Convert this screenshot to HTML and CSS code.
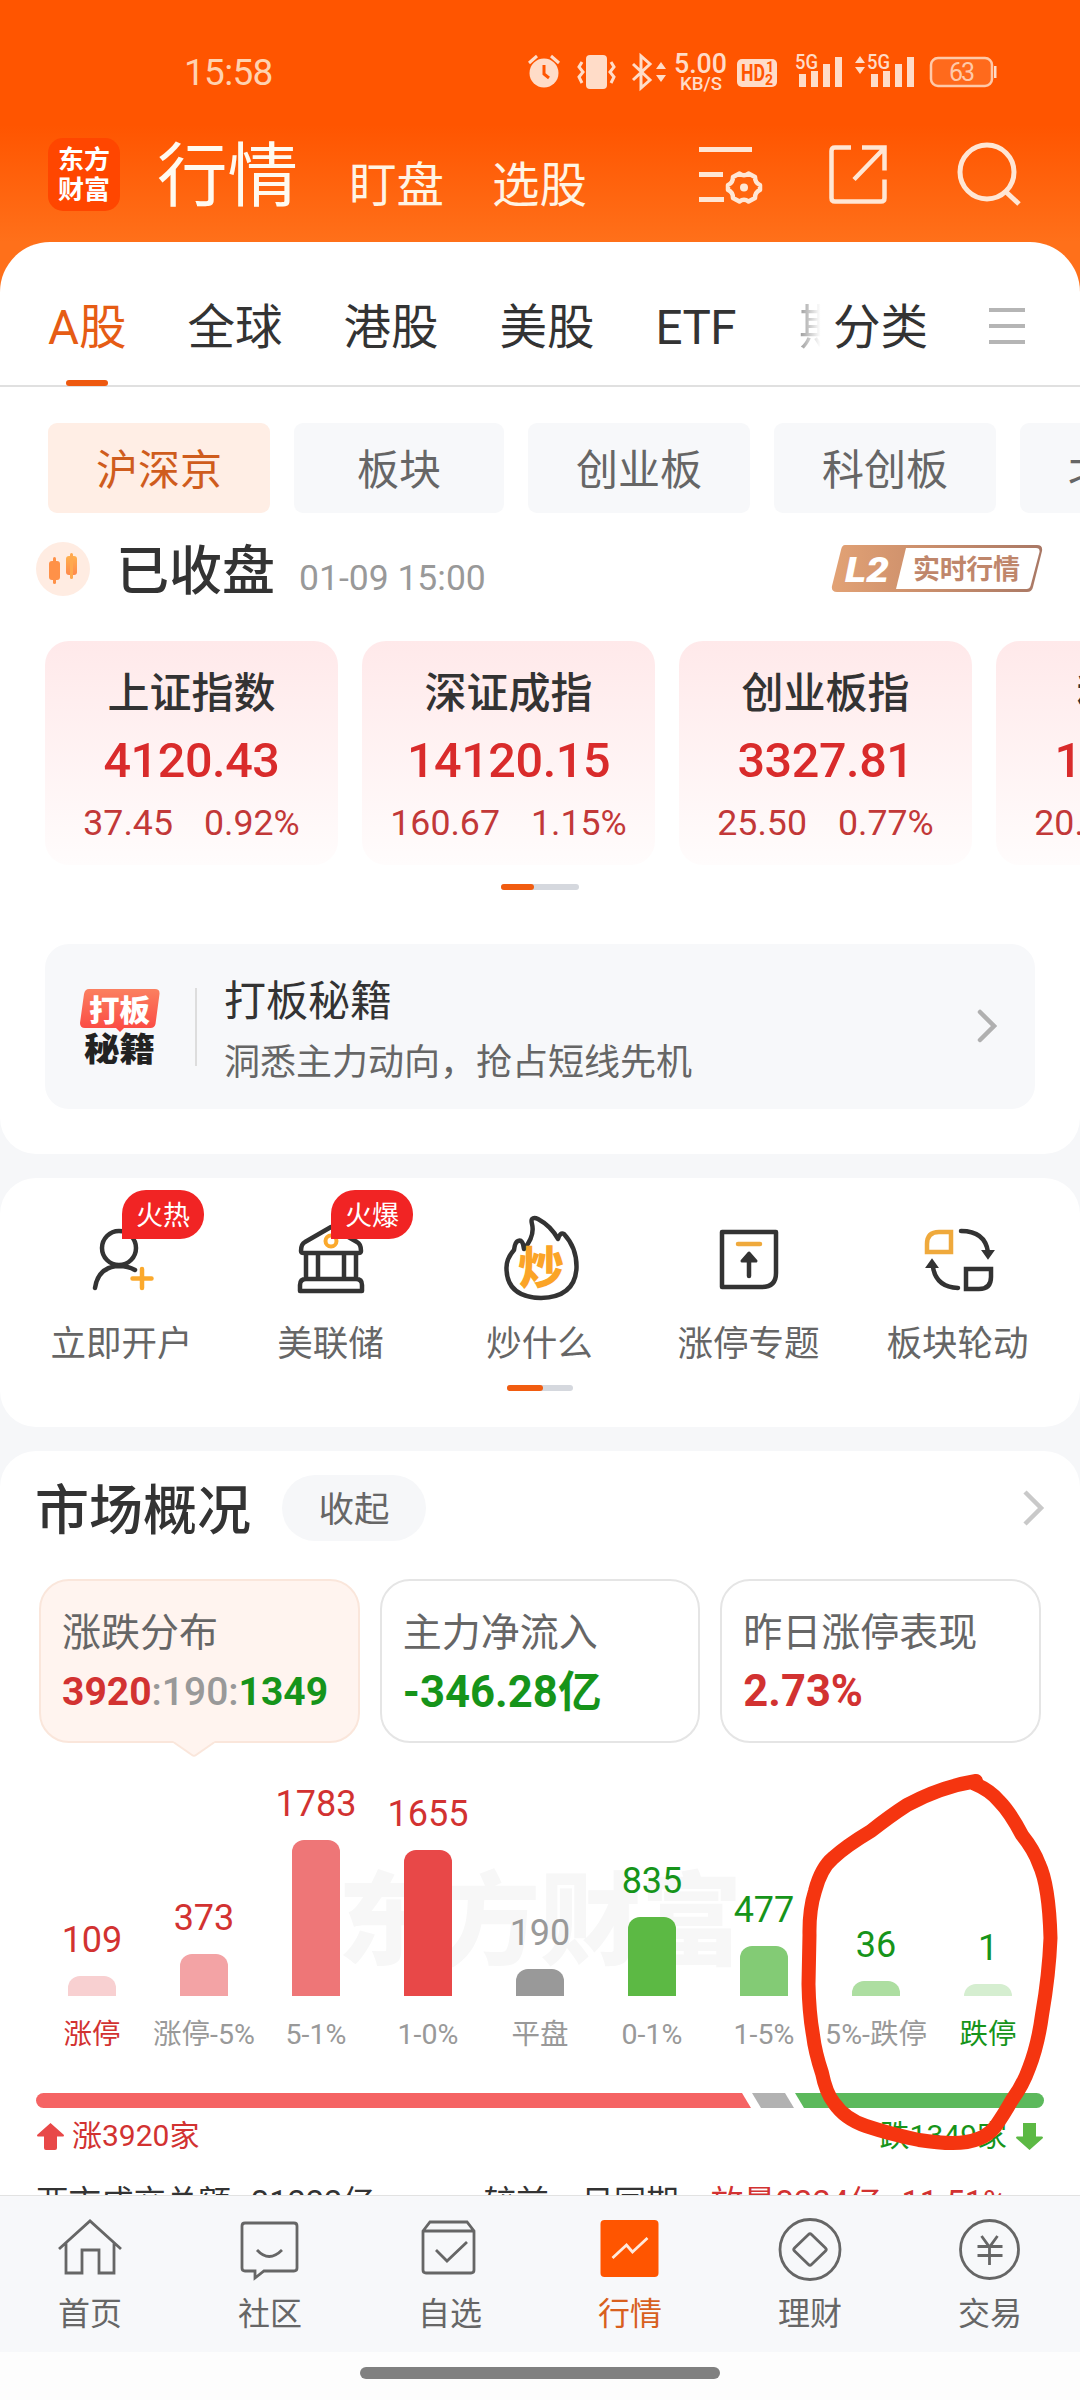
FILE: index.html
```html
<!DOCTYPE html>
<html lang="zh-CN">
<head>
<meta charset="utf-8">
<title>行情</title>
<link rel="stylesheet" href="styles.css">
</head>
<body>
<div class="phone">
  <div class="scroll">
    <div class="hero">
      <div class="status">
        <span class="time">15:58</span>
        <svg class="sys" width="472" height="50" viewBox="0 0 472 50" fill="#ffdcc8" stroke="none">
          <circle cx="16" cy="26" r="14.5"/>
          <path d="M1 16L9 9M31 16L23 9" stroke="#ffdcc8" stroke-width="3"/>
          <path d="M16 18v9l5 4" fill="none" stroke="#ff5500" stroke-width="3"/>
          <rect x="58" y="8" width="21" height="34" rx="4"/>
          <path d="M54 15l-3 5 4 5-4 5 3 6M83 15l3 5-4 5 4 5-3 6" fill="none" stroke="#ffdcc8" stroke-width="3"/>
          <path d="M105 17l17 16-9 8V9l9 8-17 16" fill="none" stroke="#ffdcc8" stroke-width="3"/>
          <path d="M128 22l5-7 5 7zM128 28l5 7 5-7z"/>
          <text class="t-speed" x="146" y="25.500" textLength="53" lengthAdjust="spacingAndGlyphs">5.00</text>
          <text class="t-unit" x="152" y="43" textLength="42" lengthAdjust="spacingAndGlyphs">KB/S</text>
          <rect x="209" y="12" width="40" height="28" rx="5"/>
          <text class="t-hd" x="213" y="34" textLength="24" lengthAdjust="spacingAndGlyphs">HD</text>
          <text class="t-mini" x="238" y="25">1</text>
          <text class="t-mini" x="237" y="38">2</text>
          <text class="t-net" x="267" y="22" textLength="23" lengthAdjust="spacingAndGlyphs">5G</text>
          <path d="M271 27h7v13h-7zM283 24h7v16h-7zM295 17h7v23h-7zM307 10h7v30h-7z"/>
          <path d="M327 16l5-7 5 7zM327 20l5 7 5-7z"/>
          <text class="t-net" x="339" y="22" textLength="23" lengthAdjust="spacingAndGlyphs">5G</text>
          <path d="M343 27h7v13h-7zM355 24h7v16h-7zM367 17h7v23h-7zM379 10h7v30h-7z"/>
          <rect x="403" y="11" width="61" height="28" rx="7" fill="#ff6a1c" stroke="#ffc9a8" stroke-width="2.500"/>
          <path d="M466 19h2.500v12h-2.500z"/>
          <text class="t-batt" x="421" y="33.500" textLength="26">63</text>
        </svg>
      </div>
      <div class="topbar">
        <div class="logo"><span>东方</span><span>财富</span></div>
        <h1>行情</h1>
        <span class="nav">盯盘</span>
        <span class="nav nav2">选股</span>
        <svg class="tools" width="324" height="66" viewBox="0 0 324 66" fill="none" stroke="#ffe6d4" stroke-width="5">
          <path d="M0 10.500h53M0 35.500h24M0 60.500h25"/>
          <path d="M40.500 34.500q4.500 3.500 9 0l6.500 3.500q0 6 5 8v5q-5 2-5 8l-6.500 3.500q-4.500-3.500-9 0l-6.500-3.500q0-6-5-8v-5q5-2 5-8z" stroke-width="4.500" stroke-linejoin="round"/>
          <circle cx="45" cy="48.500" r="4" fill="#ffe6d4" stroke="none"/>
          <path d="M152 8.500h-16q-3.500 0-3.500 3.500v47q0 3.500 3.500 3.500h46q3.500 0 3.500-3.500V40.500M163 8.500h22.500v23M184 10.500l-29 30" stroke-width="4.500"/>
          <circle cx="288" cy="33" r="27"/>
          <path d="M306 52l14 13"/>
        </svg>
      </div>
    </div>

    <section class="card main">
      <div class="tabs">
        <span class="tab on">A股</span><span class="tab">全球</span><span class="tab">港股</span><span class="tab">美股</span><span class="tab etf">ETF</span><span class="tab fade">期货</span><span class="tab">分类</span>
        <i class="burger"></i>
      </div>
      <div class="chips">
        <span class="chip on">沪深京</span><span class="chip two">板块</span><span class="chip">创业板</span><span class="chip">科创板</span><span class="chip">北交所</span>
      </div>
      <div class="closed">
        <svg width="54" height="54" viewBox="0 0 54 54">
          <defs><linearGradient id="cg" x1="0" y1="0" x2="0" y2="1"><stop offset="0" stop-color="#ffb04e"/><stop offset="1" stop-color="#ff8a4c"/></linearGradient></defs>
          <circle cx="27" cy="27" r="27" fill="#ffece2"/>
          <rect x="13" y="19" width="11" height="19" rx="3" fill="#ff9148"/><rect x="17" y="15" width="3" height="27" rx="1.500" fill="#ff9148"/>
          <rect x="30" y="14" width="11" height="19" rx="3" fill="url(#cg)"/><rect x="34" y="11" width="3" height="26" rx="1.500" fill="#ffa84e"/>
        </svg>
        <b>已收盘</b><span>01-09 15:00</span>
        <svg class="l2" width="214" height="50" viewBox="0 0 214 50">
          <defs><linearGradient id="lg"><stop offset="0" stop-color="#e2a275"/><stop offset=".32" stop-color="#d2946e"/><stop offset="1" stop-color="#a97865"/></linearGradient></defs>
          <path d="M15 1h192q6 0 5 6l-9 36q-1 5-6 5H7q-6 0-5-6l9-36q1-5 4-5z" fill="url(#lg)"/>
          <path d="M76 4h130q4 0 3.500 4l-9 34q-1 3-4 3H66z" fill="#fff"/>
          <text class="l2a" x="15" y="37.500" textLength="44" lengthAdjust="spacingAndGlyphs">L2</text>
          <text class="l2b" x="83" y="34.500" textLength="107">实时行情</text>
        </svg>
      </div>
      <div class="indices">
        <div class="idx"><b>上证指数</b><strong>4120.43</strong><p><span>37.45</span><span>0.92%</span></p></div>
        <div class="idx"><b>深证成指</b><strong>14120.15</strong><p><span>160.67</span><span>1.15%</span></p></div>
        <div class="idx"><b>创业板指</b><strong>3327.81</strong><p><span>25.50</span><span>0.77%</span></p></div>
        <div class="idx"><b>科创50</b><strong>1475.97</strong><p><span>20.85</span><span>1.43%</span></p></div>
      </div>
      <div class="pager"><i></i></div>
      <div class="banner">
        <svg width="80" height="76" viewBox="0 0 80 76">
          <defs><linearGradient id="bg" x1="0" y1="0" x2="0" y2="1"><stop offset="0" stop-color="#fb8060"/><stop offset="1" stop-color="#fb4742"/></linearGradient></defs>
          <path d="M9 0h66q5 0 4.500 5l-4 30q-1 4-5 4H44l-4 4-4-4H5q-5 0-5-5l4-29q1-5 5-5z" fill="url(#bg)"/>
          <text class="b1" x="9" y="32" textLength="61" lengthAdjust="spacingAndGlyphs">打板</text>
          <text class="b2" x="4" y="72" textLength="71" lengthAdjust="spacingAndGlyphs">秘籍</text>
        </svg>
        <i class="rule"></i>
        <div class="btxt"><b>打板秘籍</b><span>洞悉主力动向，抢占短线先机</span></div>
        <svg class="chev" width="20" height="36" viewBox="0 0 20 36" fill="none" stroke="#b0b0b0" stroke-width="4.500" stroke-linecap="round"><path d="M3 3l14 14L3 31"/></svg>
      </div>
    </section>

    <section class="card grid">
      <div class="cells">
        <div class="cell">
          <svg width="84" height="84" viewBox="0 0 84 84" fill="none" stroke="#333" stroke-width="4.500" stroke-linecap="round"><circle cx="39" cy="30" r="17"/><path d="M15 70q3-21 24-22 9 0 16 4"/><path d="M62 51v19M52.500 60.500h19" stroke="#fba92c"/></svg>
          <em>火热</em><span>立即开户</span>
        </div>
        <div class="cell">
          <svg width="84" height="84" viewBox="0 0 84 84" fill="none" stroke="#333" stroke-width="4.500" stroke-linejoin="round"><path d="M12 33q0-7 4-9L42 9l26 15q4 2 4 9 0 2-3 2H15q-3 0-3-2zM17 35v26M29 35v26M55 35v26M67 35v26M11 73v-6q0-6 6-6h50q6 0 6 6v6z"/><circle cx="42" cy="23" r="5.500" stroke="#fba92c" stroke-width="4"/></svg>
          <em>火爆</em><span>美联储</span>
        </div>
        <div class="cell">
          <svg width="84" height="84" viewBox="0 0 84 84" fill="none" stroke="#333" stroke-width="4.500" stroke-linejoin="round"><path d="M34 1q2-2 6 0 13 7 20 20 2-7 6-5 13 14 12.500 34Q77 79 43 80 9 79 8.500 51 8 41 16 32q1-8 4-9 5-2 6 8Q37 18 34 6q-1-4 0-5z"/><text class="chao" x="20" y="66" textLength="46">炒</text></svg>
          <span>炒什么</span>
        </div>
        <div class="cell">
          <svg width="84" height="84" viewBox="0 0 84 84" fill="none" stroke="#333" stroke-width="4.500" stroke-linejoin="round"><path d="M15 14h54v41q0 14-14 14H15z"/><path d="M31 26h22" stroke="#efa93c" stroke-linecap="round"/><path d="M42 58V38" stroke-linecap="round"/><path d="M35 43l7-8 7 8z" fill="#333" stroke-width="3"/></svg>
          <span>涨停专题</span>
        </div>
        <div class="cell">
          <svg width="84" height="84" viewBox="0 0 84 84" fill="none" stroke="#333" stroke-width="4.500"><path d="M23 14h12v20H11V26q0-12 12-12z" stroke="#efa93c"/><path d="M50 51h25v8q0 12-12 12H50z"/><path d="M45 13q24 0 27 21M17 49q3 20 25 21" stroke-linecap="round"/><path d="M67 33h10l-5 7zM11 49h10l-5-7z" fill="#333" stroke-width="2"/></svg>
          <span>板块轮动</span>
        </div>
      </div>
      <div class="pager small"><i></i></div>
    </section>

    <section class="card market">
      <div class="mhead"><h2>市场概况</h2><span class="pill">收起</span>
        <svg class="chev2" width="24" height="40" viewBox="0 0 24 40" fill="none" stroke="#c9c9c9" stroke-width="4.500"><path d="M4 4l16 16L4 36"/></svg></div>
      <div class="boxes">
        <div class="box on"><span>涨跌分布</span><b class="ratio"><i class="up">3920</i><i class="flat">:190:</i><i class="down">1349</i></b>
          <svg class="notch" width="42" height="17" viewBox="0 0 42 17"><path d="M0 0h42L23 14q-2 1.500-4 0z" fill="#fff4ef"/><path d="M1 1.500L19 14q2 1.500 4 0L41 1.500" fill="none" stroke="#fae6db" stroke-width="2"/></svg></div>
        <div class="box"><span>主力净流入</span><b class="down">-346.28亿</b></div>
        <div class="box"><span>昨日涨停表现</span><b class="up pct">2.73%</b></div>
      </div>
      <div class="chart">
        <div class="mark">东方财富</div>
        <div class="col up"><b>109</b><i class="c1" style="height:20px"></i><span class="up">涨停</span></div>
        <div class="col up"><b>373</b><i class="c2" style="height:42px"></i><span>涨停-5%</span></div>
        <div class="col up"><b>1783</b><i class="c3" style="height:156px"></i><span>5-1%</span></div>
        <div class="col up"><b>1655</b><i class="c4" style="height:146px"></i><span>1-0%</span></div>
        <div class="col flat"><b>190</b><i class="c5" style="height:27px"></i><span>平盘</span></div>
        <div class="col down"><b>835</b><i class="c6" style="height:79px"></i><span>0-1%</span></div>
        <div class="col down"><b>477</b><i class="c7" style="height:50px"></i><span>1-5%</span></div>
        <div class="col down"><b>36</b><i class="c8" style="height:15px"></i><span>5%-跌停</span></div>
        <div class="col down"><b>1</b><i class="c9" style="height:12px"></i><span class="down">跌停</span></div>
      </div>
      <div class="bar"><i class="r"></i><i class="g"></i><i class="n"></i></div>
      <div class="legend">
        <svg width="27" height="27" viewBox="0 0 27 27" fill="#e84848"><path d="M13.500 0L27 12q0 1.500-1 1.500h-6V25q0 2-2 2h-9q-2 0-2-2V13.500H1q-1 0-1-1.500z"/></svg>
        <span class="up">涨3920家</span>
        <span class="down">跌1349家</span>
        <svg width="27" height="27" viewBox="0 0 27 27" fill="#5cb944"><path d="M13.500 27L27 15q0-1.500-1-1.500h-6V0H7v13.500H1q-1 0-1 1.500z"/></svg>
      </div>
      <div class="turnover"><span>两市成交总额</span><span>31222亿</span><span class="prev">较前一日同期</span><span class="up">放量3224亿</span><span class="up">11.51%</span></div>
    </section>
  </div>

  <nav class="tabbar">
    <div><svg width="66" height="66" viewBox="0 0 66 66"><path d="M2 33L33 5l31 28M9 27v30h16V34h17v23h15V27"/></svg><span>首页</span></div>
    <div><svg width="66" height="66" viewBox="0 0 66 66"><path d="M8 7h49q3 0 3 3v42q0 3-3 3H27l-9 7v-7H8q-3 0-3-3V10q0-3 3-3zM20 34q12 13 25 0"/></svg><span>社区</span></div>
    <div><svg width="66" height="66" viewBox="0 0 66 66"><path d="M6 15l7-9h37l7 9v39q0 3-3 3H9q-3 0-3-3zM6 15h51M19 34l11 11 20-19"/></svg><span>自选</span></div>
    <div class="on"><svg width="66" height="66" viewBox="0 0 66 66"><rect x="3.500" y="4" width="58" height="57" rx="4" fill="#ff5500" stroke="none"/><path d="M15.500 42l14-13 6 7 15-14" stroke="#ffe9dc"/></svg><span>行情</span></div>
    <div><svg width="66" height="66" viewBox="0 0 66 66"><circle cx="33" cy="33.500" r="30"/><path d="M31.500 18.500q1.500-1.500 3 0l14 13.500q1.500 1.500 0 3l-14 13.500q-1.500 1.500-3 0l-14-13.500q-1.500-1.500 0-3z"/></svg><span>理财</span></div>
    <div><svg width="66" height="66" viewBox="0 0 66 66"><circle cx="32.500" cy="33.500" r="29"/><path d="M24.500 20l8 11 8-11M20.500 30.500h25M20.500 39.500h25M32.500 31v18"/></svg><span>交易</span></div>
  </nav>
  <div class="homebar"><i></i></div>

  <svg class="doodle" width="270" height="390" viewBox="795 1765 270 390" fill="none" stroke="#f53510" stroke-width="14" stroke-linecap="round" stroke-linejoin="round"><path d="M976 1781Q940 1787 907 1805Q890 1816 871 1831Q846 1846 833 1858Q821 1868 815 1891Q809 1910 809.500 1935L808.500 1984Q809 2012 813 2035Q815 2052 822 2073Q826 2093 834 2103Q845 2119 866 2126Q890 2134 919 2140Q938 2143 953 2143Q982 2143 995 2127Q1003 2116 1012 2100Q1023 2085 1029 2068Q1038 2045 1042 2015Q1049 1975 1050.500 1938Q1049 1885 1039 1864Q1034 1850 1022 1835Q1010 1812 999 1801Q990 1790 973 1783"/></svg>
</div>
</body>
</html>
```

FILE: styles.css
```css
* { box-sizing: border-box; margin: 0; padding: 0; }
body { background: #fff; overflow: hidden; font-family: Roboto, "Noto Sans CJK SC", sans-serif; line-height: 1; color: #333; }
i, em { font-style: normal; }
svg { display: block; flex: none; }
span, b, strong { white-space: nowrap; }
.phone { position: relative; width: 1080px; height: 2400px; display: flex; flex-direction: column; overflow: hidden; }
.scroll { height: 2195px; overflow: hidden; background: #f6f7f9; }
.up { color: #d23231; }
.down { color: #16941a; }
.flat { color: #999; }

.hero { height: 292px; background: linear-gradient(#ff5500 125px, #ff701a 242px); }
.status { height: 120px; padding: 47px 0 0 184px; display: flex; }
.time { width: 344px; padding-top: 7px; font-size: 37px; letter-spacing: -.7px; color: #ffd2b0; }
.sys text { fill: #ffdcc8; stroke: none; font-family: Roboto, sans-serif; font-weight: 500; }
.sys .t-speed { font-size: 27px; }
.sys .t-unit { font-size: 19px; }
.sys .t-hd { font-size: 24px; fill: #ff5500; font-weight: 700; }
.sys .t-mini { font-size: 14px; fill: #ff5500; font-weight: 700; }
.sys .t-net { font-size: 21px; }
.sys .t-batt { font-size: 25px; font-weight: 400; fill: #ffc9a8; }
.topbar { display: flex; height: 122px; padding-left: 48px; }
.logo { width: 72px; height: 73px; margin-top: 18px; border-radius: 15px; background: #ff4600; color: #fff; font-size: 26px; font-weight: 700; display: flex; flex-direction: column; align-items: center; justify-content: center; gap: 4px; }
h1 { margin: 20px 0 0 37px; font-size: 70.500px; font-weight: 400; color: #fffaf0; line-height: 74px; }
.nav { margin: 43px 0 0 51px; font-size: 47.500px; color: #fff4e4; }
.nav2 { margin-left: 48px; }
.tools { margin: 19px 0 0 112px; overflow: visible; }

.card { background: #fff; border-radius: 36px; }
.main { height: 912px; margin-top: -50px; border-radius: 50px 50px 36px 36px; }
.tabs { height: 145px; padding: 62px 0 0 48px; display: flex; font-size: 47.500px; border-bottom: 2px solid #e0e0e0; line-height: 48px; }
.tab { margin-right: 61px; }
.tab.on { color: #e65c14; position: relative; }
.tab.on::after { content: ""; position: absolute; left: 18px; top: 76px; width: 42px; height: 6px; border-radius: 3px; background: #ee590f; }
.tab.etf { margin-right: 63px; letter-spacing: -.5px; }
.tab.fade { width: 24px; overflow: hidden; margin-right: 10px; background: linear-gradient(90deg, #999, #fff 90%); -webkit-background-clip: text; background-clip: text; color: transparent; }
.burger { margin-top: 4px; width: 36px; height: 36px; background: linear-gradient(#b5b5b5 0 4px, transparent 4px 16px, #b5b5b5 16px 20px, transparent 20px 32px, #b5b5b5 32px); }
.chips { display: flex; gap: 24px; margin-top: 36px; padding-left: 48px; overflow: hidden; }
.chip { flex: none; width: 222px; height: 90px; text-align: center; border-radius: 9px; background: #f7f8fa; color: #666; font-size: 42px; line-height: 96px; }
.chip.two { width: 210px; }
.chip.on { background: #ffeee5; color: #cf5c1d; }
.closed { display: flex; height: 72px; margin-top: 20px; padding: 0 36px; align-items: center; }
.closed b { margin: 7px 0 0 26px; font-size: 53px; font-weight: 500; }
.closed span { margin: 19px 0 0 24px; font-size: 35.500px; color: #999; }
.l2 { margin-left: auto; }
.l2a { font: italic 900 35px Roboto, sans-serif; fill: #fff; }
.l2b { font: 700 27px "Noto Sans CJK SC", sans-serif; fill: #bf866b; }
.indices { display: flex; gap: 24px; margin-top: 36px; padding-left: 45px; overflow: hidden; }
.idx { flex: none; width: 293px; height: 224px; border-radius: 24px; background: linear-gradient(#ffe9ea, #fffcfc); display: flex; flex-direction: column; align-items: center; padding-top: 32px; }
.idx b { font-size: 42px; font-weight: 500; }
.idx strong { margin-top: 22px; font-size: 48.500px; font-weight: 500; color: #d92b2b; letter-spacing: -.4px; }
.idx p { display: flex; gap: 31px; margin-top: 20px; font-size: 35.700px; color: #c23838; }
.pager { width: 78px; height: 6px; margin: 19px auto 0; border-radius: 3px; background: #d5d8de; }
.pager i { display: block; width: 33px; height: 6px; border-radius: 3px; background: #f15c10; }
.banner { height: 165px; margin: 54px 45px 0; padding: 0 38px 0 35px; border-radius: 24px; background: #f7f8fa; display: flex; align-items: center; }
.b1 { font: 900 30px "Noto Sans CJK SC", sans-serif; fill: #fff; }
.b2 { font: 900 33px "Noto Sans CJK SC", sans-serif; fill: #222; }
.rule { width: 2px; height: 78px; margin: 0 27px 0 35px; background: #ddd; }
.btxt { display: flex; flex-direction: column; gap: 22px; margin-top: 9px; }
.btxt b { font-size: 42px; font-weight: 400; }
.btxt span { font-size: 36px; color: #666; }
.chev { margin-left: auto; }

.grid { height: 249px; margin-top: 24px; }
.cells { display: flex; padding-left: 17px; height: 207px; }
.cell { position: relative; width: 209px; display: flex; flex-direction: column; align-items: center; padding-top: 40px; font-size: 35.500px; color: #666; }
.cell svg { overflow: visible; }
.cell span { margin-top: 25px; }
.cell em { position: absolute; left: 105px; top: 12px; width: 82px; height: 49px; border-radius: 24px 24px 24px 0; background: #f12424; color: #fff; font-size: 27px; line-height: 53px; text-align: center; }
.chao { font: 900 46px "Noto Sans CJK SC", sans-serif; fill: #fba427; stroke: none; }
.pager.small { width: 66px; margin-top: 0; }
.pager.small i { width: 36px; }

.market { height: 900px; margin-top: 24px; }
.mhead { display: flex; align-items: center; height: 114px; padding: 0 35px 0 35px; }
h2 { margin-top: 8px; font-size: 54px; font-weight: 500; line-height: 56px; }
.pill { margin-left: 31px; width: 144px; height: 66px; border-radius: 33px; background: #f6f7f9; color: #666; font-size: 35.500px; line-height: 71px; text-align: center; }
.chev2 { margin-left: auto; }
.boxes { display: flex; gap: 20px; padding: 14px 39px 0; }
.box { position: relative; width: 321px; height: 164px; border: 2px solid #e5e5e5; border-radius: 30px; padding: 33px 0 0 21px; display: flex; flex-direction: column; }
.box span { font-size: 39px; color: #666; }
.box b { margin-top: 16px; font-size: 43.700px; line-height: 46px; }
.box b.ratio { font-size: 39px; }
.box b.pct { font-size: 43.500px; }
.box.on { background: #fff4ef; border-color: #fae6db; }
.box.on .flat { font-weight: 500; }
.notch { position: absolute; left: 132px; top: 160px; }
.chart { position: relative; display: flex; height: 290px; margin-top: 18px; padding-left: 36px; }
.mark { position: absolute; left: 338px; top: 107px; font-size: 101px; font-weight: 900; color: #f7f7f7; line-height: 110px; white-space: nowrap; }
.col { position: relative; width: 112px; height: 290px; display: flex; flex-direction: column; align-items: center; justify-content: flex-end; }
.col b { font-size: 36px; font-weight: 400; margin-bottom: 18px; }
.col i { width: 48px; border-radius: 12px 12px 0 0; flex: none; }
.col span { margin: 25px 0 1px; font-size: 28.500px; height: 29px; }
.col span:not(.up):not(.down) { color: #999; }
.c1 { background: #f8d0d1; } .c2 { background: #f3a3a5; } .c3 { background: #ee7677; } .c4 { background: #e84848; } .c5 { background: #999; }
.c6 { background: #5cb944; } .c7 { background: #83cb75; } .c8 { background: #addea1; } .c9 { background: #d5eed0; }
.bar { display: flex; height: 15px; margin: 42px 36px 0; gap: 1px; }
.bar .r { width: 715px; background: #f56464; border-radius: 8px 0 0 8px; clip-path: polygon(0 0, 706px 0, 100% 100%, 0 100%); }
.bar .g { width: 42px; background: #b2b2b2; clip-path: polygon(0 0, 33px 0, 100% 100%, 9px 100%); }
.bar .n { flex: 1; background: #5cb95c; border-radius: 0 8px 8px 0; clip-path: polygon(0 0, 100% 0, 100% 100%, 9px 100%); }
.legend { display: flex; align-items: center; height: 30px; margin: 13px 37px 0; font-size: 30px; }
.legend span { margin-left: 8px; }
.legend .down { margin: 0 9px 0 auto; }
.turnover { display: flex; margin: 36px 36px 0; font-size: 32.500px; }
.turnover span { margin-right: 20px; }
.turnover .prev { margin: 0 32px 0 89px; }

.tabbar { height: 157px; border-top: 1px solid #e2e2e2; background: #f7f8fa; display: flex; }
.tabbar div { width: 180px; display: flex; flex-direction: column; align-items: center; padding-top: 20px; font-size: 32px; color: #666; }
.tabbar svg { fill: none; stroke: #666; stroke-width: 2.800; }
.tabbar span { margin-top: 16px; }
.tabbar .on { color: #d8601e; }
.homebar { height: 48px; padding-top: 15px; background: #fdfdfd; }
.homebar i { display: block; width: 360px; height: 12px; margin: 0 auto; border-radius: 6px; background: #808080; }
.doodle { position: absolute; left: 795px; top: 1765px; }
```
